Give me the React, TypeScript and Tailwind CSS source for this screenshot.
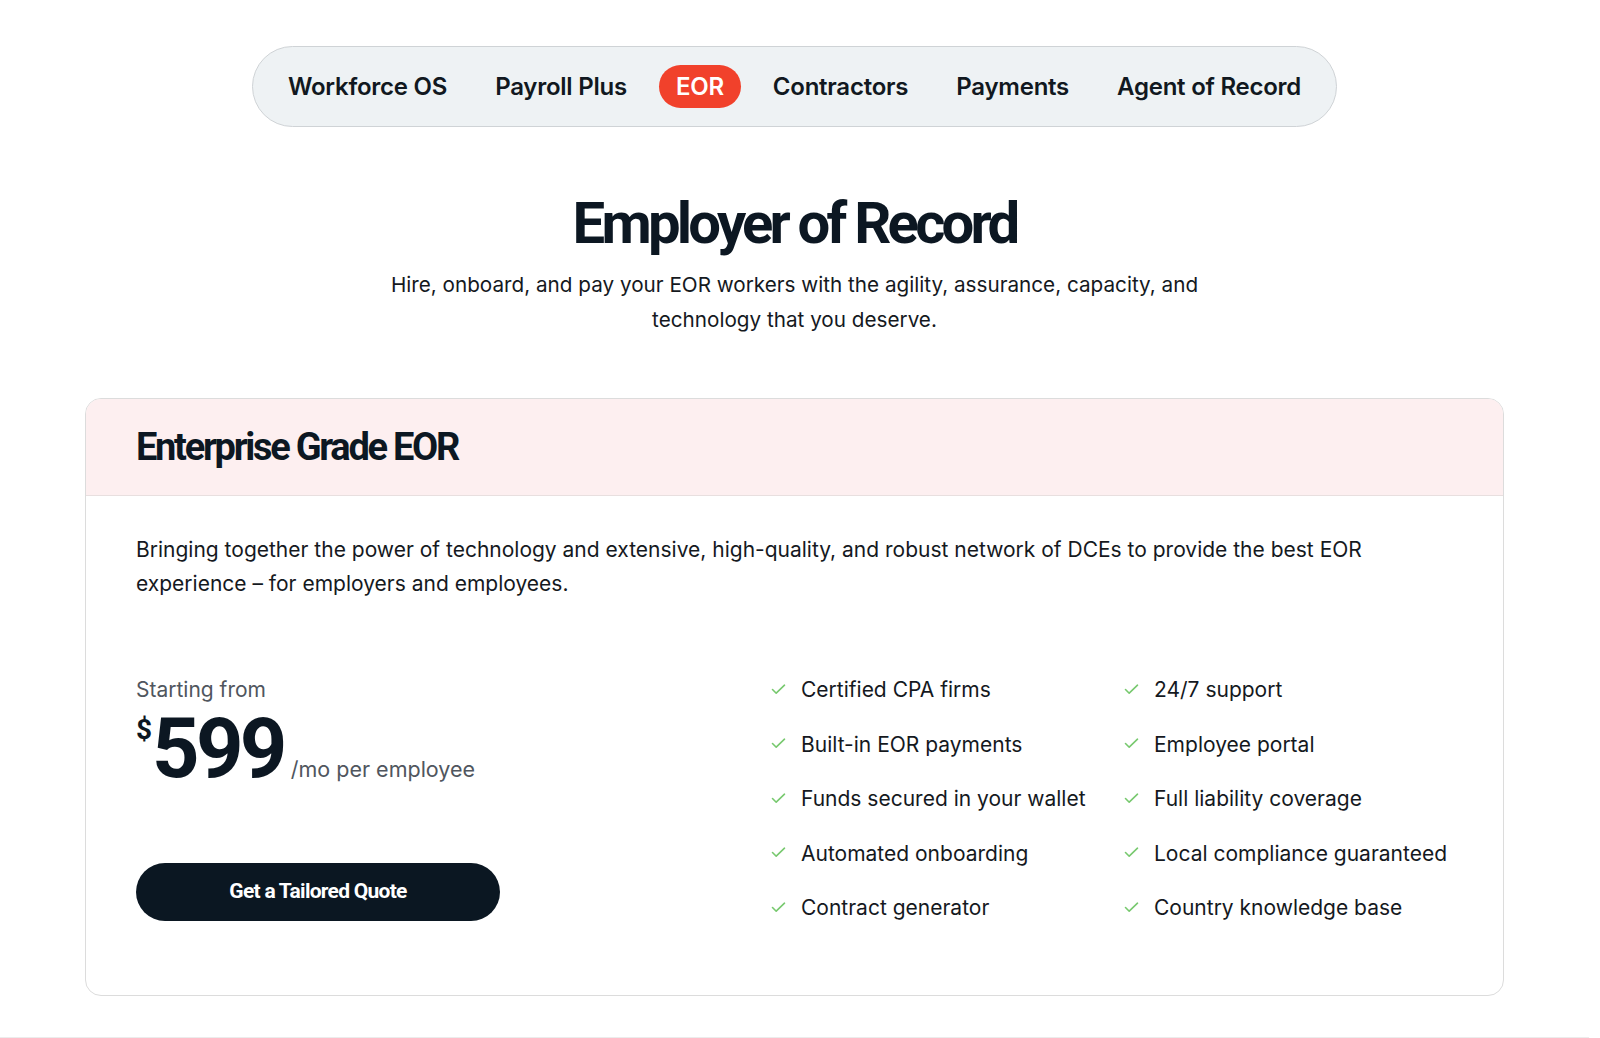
import React from "react";

const navItems = [
  "Workforce OS",
  "Payroll Plus",
  "EOR",
  "Contractors",
  "Payments",
  "Agent of Record",
];

const featuresLeft = [
  "Certified CPA firms",
  "Built-in EOR payments",
  "Funds secured in your wallet",
  "Automated onboarding",
  "Contract generator",
];

const featuresRight = [
  "24/7 support",
  "Employee portal",
  "Full liability coverage",
  "Local compliance guaranteed",
  "Country knowledge base",
];

const display = "font-['Roboto',sans-serif] font-bold";

const Check: React.FC = () => (
  <svg
    width="15"
    height="11"
    viewBox="0 0 15 11"
    fill="none"
    className="shrink-0 -translate-y-[1px]"
  >
    <path
      d="M1.5 5.5 L5.2 9.2 L13.5 1.2"
      stroke="#78c96f"
      strokeWidth="1.6"
      strokeLinecap="round"
      strokeLinejoin="round"
    />
  </svg>
);

const FeatureList: React.FC<{ items: string[] }> = ({ items }) => (
  <ul className="flex flex-col gap-y-[26.5px]">
    {items.map((item) => (
      <li key={item} className="flex h-[28px] items-center gap-x-[15px]">
        <Check />
        <span className="whitespace-nowrap text-[21px] leading-[28px] text-[#15191e]">
          {item}
        </span>
      </li>
    ))}
  </ul>
);

export default function App() {
  return (
    <div className="min-h-screen bg-white pr-[11px] font-['Inter',sans-serif] text-[#15191e]">
      {/* === Product switcher ============================================ */}
      <div className="flex justify-center pt-[46px]">
        <nav className="flex h-[81px] items-center gap-x-4 rounded-full border border-[#cfd3d6] bg-[#eef2f4] px-[19px]">
          {navItems.map((label) => (
            <span
              key={label}
              className={
                label === "EOR"
                  ? "flex h-[43px] items-center rounded-full bg-[#f1412b] px-[17px] text-[24px] font-semibold tracking-[-0.01em] text-white"
                  : "px-4 text-[24px] font-semibold tracking-[-0.01em] text-[#111820]"
              }
            >
              {label}
            </span>
          ))}
        </nav>
      </div>

      {/* === Title ======================================================= */}
      <div className="mt-[67px] flex flex-col items-center text-center">
        <h1
          className={`${display} text-[58px] leading-[58px] tracking-[-0.065em] text-[#0c1722]`}
        >
          Employer of Record
        </h1>
        <p className="mt-[15px] max-w-[860px] text-[20.7px] leading-[35px] text-[#15191e]">
          Hire, onboard, and pay your EOR workers with the agility, assurance,
          capacity, and technology that you deserve.
        </p>
      </div>

      {/* === Plan card =================================================== */}
      <div className="mt-[61px] px-[85px]">
        <div className="overflow-hidden rounded-2xl border border-[#dcdcdc]">
          <div className="flex h-[97px] items-center border-b border-[#e8dfdf] bg-[#fdeff0] pr-12 pl-[50px]">
            <h2
              className={`${display} text-[38px] tracking-[-0.06em] text-[#0c1722]`}
            >
              Enterprise Grade EOR
            </h2>
          </div>

          <div className="pt-[37px] pr-12 pb-[73px] pl-[50px]">
            <p className="text-[21px] leading-[34px] text-[#15191e]">
              Bringing together the power of technology and extensive,
              high-quality, and robust network of DCEs to provide the best EOR
              experience – for employers and employees.
            </p>

            <div className="mt-[75px] flex">
              <div className="flex-1">
                <p className="text-[21px] leading-[28px] text-[#50565e]">
                  Starting from
                </p>
                <div className="mt-[3px] flex items-baseline">
                  <span
                    className={`${display} mt-[9px] self-start text-[28px] leading-none text-[#0c1722]`}
                  >
                    $
                  </span>
                  <span
                    className={`${display} text-[83px] leading-none tracking-[-0.045em] text-[#0c1722]`}
                  >
                    599
                  </span>
                  <span className="ml-[7px] text-[21.5px] leading-[28px] text-[#50565e]">
                    /mo per employee
                  </span>
                </div>
                <button
                  className={`${display} mt-[73px] h-[58px] w-[364px] rounded-full bg-[#0b1722] text-[21px] tracking-[-0.035em] text-white`}
                >
                  Get a Tailored Quote
                </button>
              </div>

              <div className="grid w-[684px] grid-cols-2 gap-x-[22px]">
                <FeatureList items={featuresLeft} />
                <FeatureList items={featuresRight} />
              </div>
            </div>
          </div>
        </div>
      </div>

      <div className="mt-[41px] border-b border-[#ececec]" />
    </div>
  );
}
